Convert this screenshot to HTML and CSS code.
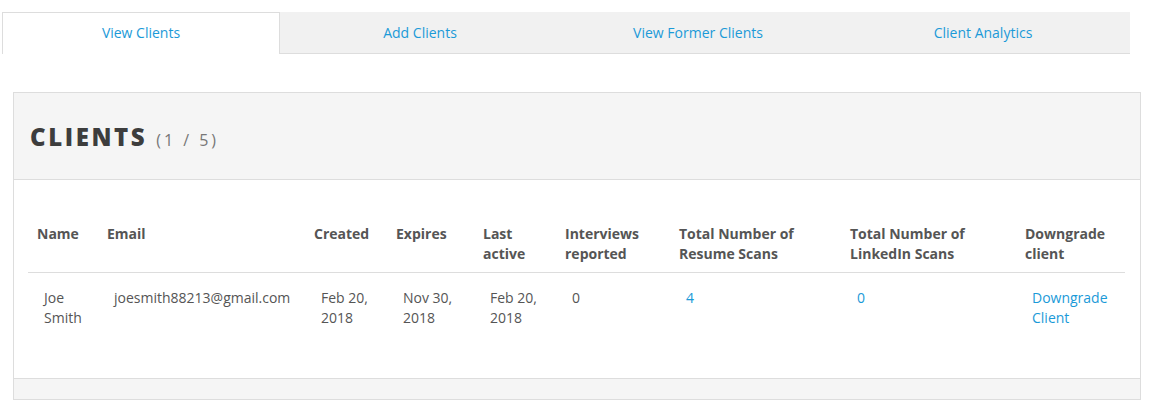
FILE: index.html
```html
<!DOCTYPE html>
<html lang="en">

<head>
  <meta charset="UTF-8" />
  <title>Clients</title>
  <link rel="stylesheet" href="styles.css">
</head>

<body>
  <ul class="tabs">
    <li class="active"><a href="#">View Clients</a></li>
    <li><a href="#">Add Clients</a></li>
    <li><a href="#">View Former Clients</a></li>
    <li><a href="#">Client Analytics</a></li>
  </ul>

  <div class="panel">
    <div class="panel-head">
      <h2>Clients <small>(1 / 5)</small></h2>
    </div>
    <div class="panel-body">
      <table class="clients">
        <colgroup>
          <col style="width: 70px">
          <col style="width: 207px">
          <col style="width: 82px">
          <col style="width: 87px">
          <col style="width: 82px">
          <col style="width: 114px">
          <col style="width: 171px">
          <col style="width: 175px">
          <col style="width: 109px">
        </colgroup>
        <thead>
          <tr>
            <th>Name</th>
            <th>Email</th>
            <th>Created</th>
            <th>Expires</th>
            <th>Last active</th>
            <th>Interviews reported</th>
            <th>Total Number of Resume Scans</th>
            <th>Total Number of LinkedIn Scans</th>
            <th>Downgrade client</th>
          </tr>
        </thead>
        <tbody>
          <tr>
            <td>Joe Smith</td>
            <td>joesmith88213@gmail.com</td>
            <td>Feb 20, 2018</td>
            <td>Nov 30, 2018</td>
            <td>Feb 20, 2018</td>
            <td>0</td>
            <td><a href="#">4</a></td>
            <td><a href="#">0</a></td>
            <td><a href="#">Downgrade Client</a></td>
          </tr>
        </tbody>
      </table>
    </div>
    <div class="panel-foot"></div>
  </div>
</body>

</html>
```

FILE: styles.css
```css
body {
  margin: 0;
  padding-top: 12px;
  font-family: "Open Sans", "Liberation Sans", sans-serif;
  font-size: 14px;
  color: #555;
  background: #fff;
}

a {
  color: #1b9ad8;
  text-decoration: none;
}

.tabs {
  display: grid;
  grid-template-columns: 278px 280px 276px 294px;
  width: 1128px;
  margin: 0 0 0 2px;
  padding: 0;
  list-style: none;
}

.tabs li {
  height: 41px;
  line-height: 41px;
  text-align: center;
  background: #f1f1f1;
  border-bottom: 1px solid #ddd;
}

.tabs li.active {
  background: #fff;
  border: 1px solid #ddd;
  border-bottom: none;
  height: 41px;
  line-height: 40px;
}

.panel {
  width: 1128px;
  margin: 38px 0 0 13px;
  border: 1px solid #ddd;
  box-sizing: border-box;
}

.panel-head {
  height: 86px;
  display: flex;
  align-items: center;
  padding-left: 16px;
  background: #f5f5f5;
  border-bottom: 1px solid #ddd;
}

.panel-head h2 {
  margin: 0;
  font-size: 24px;
  font-weight: 800;
  letter-spacing: 2.6px;
  text-transform: uppercase;
  color: #3d3d3d;
}

.panel-head small {
  font-size: 16px;
  font-weight: 400;
  letter-spacing: 3px;
  color: #777;
  margin-left: 0;
}

.panel-body {
  padding: 30px 14px 37px 14px;
}

.clients {
  width: 1097px;
  table-layout: fixed;
  border-collapse: collapse;
  line-height: 20px;
}

.clients th {
  padding: 14px 9px 8px 9px;
  text-align: left;
  vertical-align: top;
  font-weight: 700;
  color: #555;
  border-bottom: 1px solid #ddd;
}

.clients td {
  padding: 15px 9px 13px 16px;
  vertical-align: top;
}

.panel-foot {
  height: 20px;
  background: #f5f5f5;
  border-top: 1px solid #ddd;
}
```
